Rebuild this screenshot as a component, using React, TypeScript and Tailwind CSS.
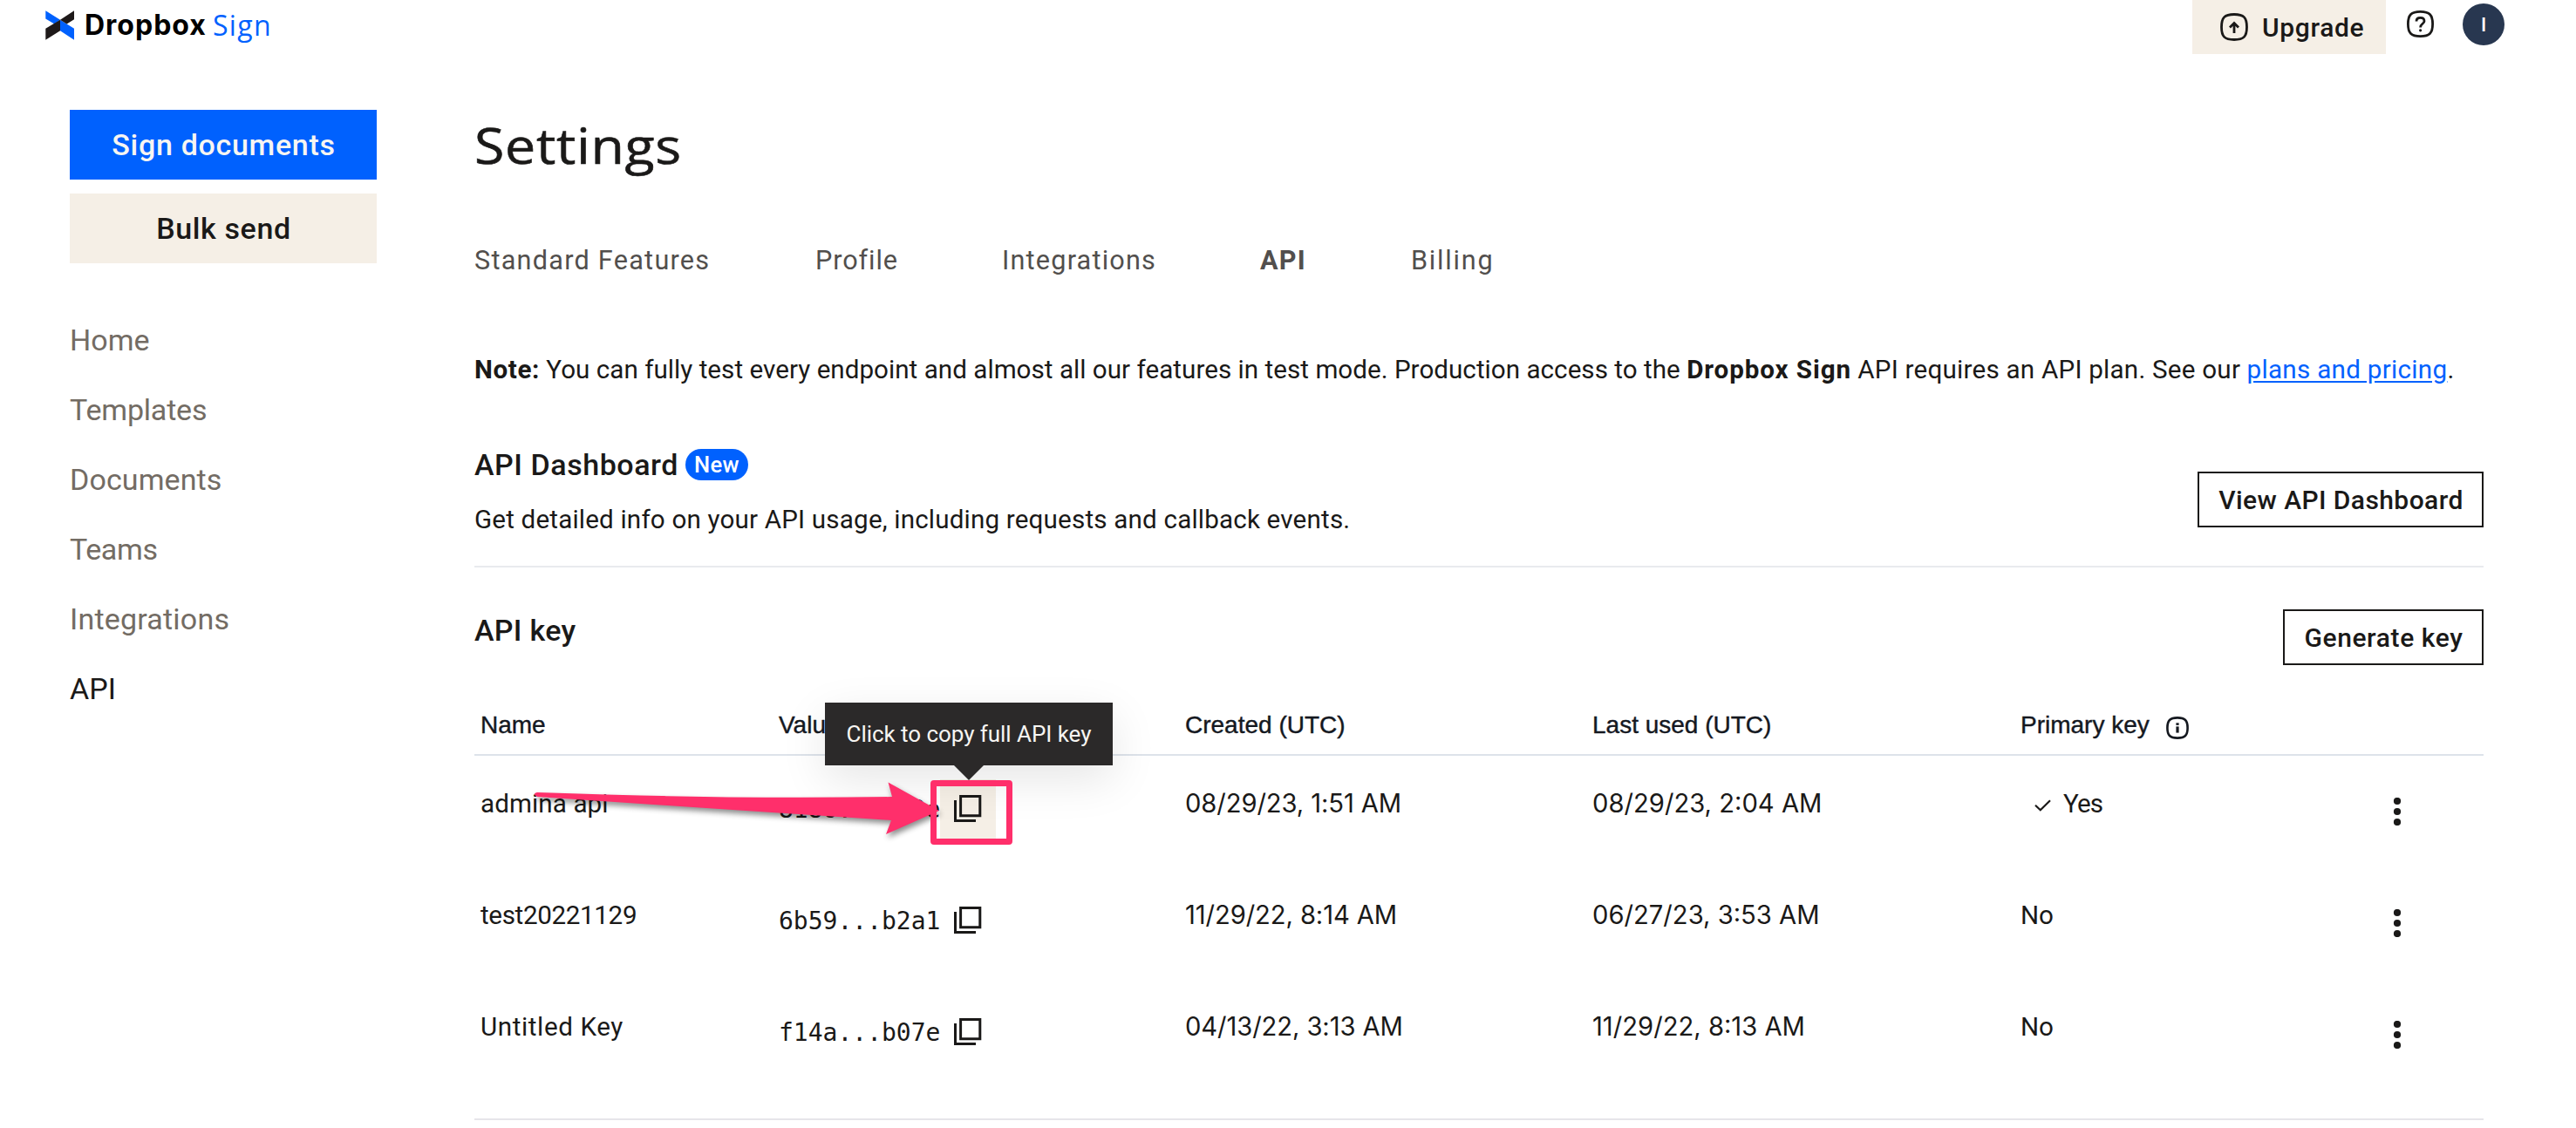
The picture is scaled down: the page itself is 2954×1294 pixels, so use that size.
import { clsx } from "clsx";

const navItems = [
  { label: "Home", className: "text-[#736c64]" },
  { label: "Templates", className: "tracking-[-0.2px] text-[#736c64]" },
  { label: "Documents", className: "tracking-[0.1px] text-[#736c64]" },
  { label: "Teams", className: "tracking-[-0.4px] text-[#736c64]" },
  { label: "Integrations", className: "tracking-[0.2px] text-[#736c64]" },
  { label: "API", className: "text-[#1a1918]" },
];

const tabs = [
  { label: "Standard Features", className: "w-[391px] tracking-[1.26px]" },
  { label: "Profile", className: "w-[214px] tracking-[0.9px]" },
  { label: "Integrations", className: "w-[296px] tracking-[1.2px]" },
  { label: "API", className: "w-[173px] font-bold tracking-[1.3px]" },
  { label: "Billing", className: "tracking-[1.8px]" },
];

const apiKeys = [
  {
    name: "admina api",
    nameClass: "tracking-[0.1px]",
    value: "8186...b09e",
    created: "08/29/23, 1:51 AM",
    lastUsed: "08/29/23, 2:04 AM",
    primary: true,
  },
  {
    name: "test20221129",
    nameClass: "tracking-[-0.35px]",
    value: "6b59...b2a1",
    created: "11/29/22, 8:14 AM",
    lastUsed: "06/27/23, 3:53 AM",
    primary: false,
  },
  {
    name: "Untitled Key",
    nameClass: "tracking-[0.6px]",
    value: "f14a...b07e",
    created: "04/13/22, 3:13 AM",
    lastUsed: "11/29/22, 8:13 AM",
    primary: false,
  },
];

const columns = "grid grid-cols-[342px_467px_467px_491px_339px_1fr]";

function LogoMark() {
  return (
    <svg className="h-[34px] w-[34px]" viewBox="0 0 34 34">
      <path d="M0.3 0.3 L17 10.7 L10.4 15.6 L0.3 9.6 Z M17 10.7 L33 20.8 V33.7 L17 23.3 Z" fill="#0061fe" />
      <path d="M33 0.3 L17 10.7 L24.6 15.6 L33 10.2 Z M17 10.7 L0.3 20.8 V33.7 L17 23.3 Z" fill="#1e1919" />
    </svg>
  );
}

function UpgradeIcon() {
  return (
    <svg className="h-8 w-8" viewBox="0 0 32 32" fill="none" stroke="#1a1918" strokeWidth="2.8">
      <path d="M16 1.5 C27 1.5 30.5 5 30.5 16 C30.5 27 27 30.5 16 30.5 C5 30.5 1.5 27 1.5 16 C1.5 5 5 1.5 16 1.5 Z" />
      <path d="M16 23 V12 M11 16.6 L16 11.6 L21 16.6" />
    </svg>
  );
}

function HelpIcon() {
  return (
    <svg className="h-[31px] w-[31px]" viewBox="0 0 31 31" fill="none" stroke="#1a1918" strokeWidth="2.8">
      <path d="M15.5 1.4 C26 1.4 29.6 5 29.6 15.5 C29.6 26 26 29.6 15.5 29.6 C5 29.6 1.4 26 1.4 15.5 C1.4 5 5 1.4 15.5 1.4 Z" />
      <path d="M11 12.4 C11 9.8 12.8 8.4 15.5 8.4 C18.2 8.4 20 9.9 20 12.2 C20 15.3 15.6 15.4 15.6 19.4" />
      <circle cx="15.6" cy="22.8" r="1.6" fill="#1a1918" stroke="none" />
    </svg>
  );
}

function InfoIcon() {
  return (
    <svg className="h-[26px] w-[26px]" viewBox="0 0 26 26" fill="none" stroke="#14181f" strokeWidth="2.6">
      <path d="M13 1.4 C21.6 1.4 24.6 4.4 24.6 13 C24.6 21.6 21.6 24.6 13 24.6 C4.4 24.6 1.4 21.6 1.4 13 C1.4 4.4 4.4 1.4 13 1.4 Z" />
      <path d="M13 11.4 V18.6" strokeWidth="3.2" />
      <path d="M11.4 8.6 H14.6" strokeWidth="2.6" />
    </svg>
  );
}

function CopyIcon() {
  return (
    <svg className="h-8 w-8" viewBox="0 0 32 32" fill="none" stroke="#1a1918" strokeWidth="3">
      <path d="M7.6 1.5 H29.8 V23.7 H7.6 Z" />
      <path d="M1.5 6 V29.5 H25" />
    </svg>
  );
}

function CheckIcon() {
  return (
    <svg className="mt-[3px] mr-[14px] h-[14px] w-[19px]" viewBox="0 0 19 14" fill="none" stroke="#1a1918" strokeWidth="2.2">
      <path d="M1 6.8 L6.8 12.2 L18 1.2" />
    </svg>
  );
}

function KebabIcon() {
  return (
    <svg className="h-8 w-8" viewBox="0 0 32 32" fill="#1a1918">
      <circle cx="16" cy="4" r="4.1" />
      <circle cx="16" cy="16" r="4.1" />
      <circle cx="16" cy="28" r="4.1" />
    </svg>
  );
}

function Tooltip() {
  return (
    <div className="absolute top-[-61px] left-[60px] z-10 flex h-[72px] w-[330px] items-center justify-center bg-[#2b2929] text-[26px] tracking-[-0.05px] text-[#f7f5f2] shadow-[0_16px_52px_rgba(0,0,0,0.1)]">
      Click to copy full API key
      <svg className="absolute top-full left-[148px] h-[17px] w-[34px]" viewBox="0 0 34 17">
        <path d="M0 0 H34 L17 17 Z" fill="#2b2929" />
      </svg>
    </div>
  );
}

// Pink arrow and frame that call out the copy button
function Pointer() {
  return (
    <>
      <svg
        className="absolute top-[20px] left-[-280px] z-20 h-[90px] w-[490px] drop-shadow-[2px_4px_3px_rgba(0,0,0,0.45)]"
        viewBox="0 0 490 90"
        fill="#ff2f6b"
      >
        <path d="M10 22 Q230 30 417 27 L412.5 10.5 L471 43 L410 70 L416 54 Q230 42 10 27 Q6 25 7 23.5 Q8 22 10 22 Z" />
      </svg>
      <div className="absolute top-[28px] left-[181px] z-20 h-[74px] w-[94px] rounded-[4px] border-[7px] border-[#ff2f6b]" />
    </>
  );
}

function Header() {
  return (
    <header className="flex h-[62px] items-start justify-between">
      <div className="flex h-[57px] items-center pl-[52px]">
        <LogoMark />
        <span className="ml-[11px] font-[Inter,sans-serif] text-[32px] font-bold tracking-[1px] text-black">Dropbox</span>
        <span className="ml-[7px] font-['Open_Sans',sans-serif] text-[32px] tracking-[1.4px] text-[#0061fe]">Sign</span>
      </div>
      <div className="flex items-start pr-[82px]">
        <button className="flex h-[62px] w-[222px] items-center bg-[#f5efe6] pl-8 text-[30px] font-medium tracking-[0.65px]">
          <UpgradeIcon />
          <span className="ml-4">Upgrade</span>
        </button>
        <span className="mt-3 ml-6">
          <HelpIcon />
        </span>
        <span className="mt-1 ml-[33px] flex size-12 items-center justify-center rounded-full bg-[#283750] text-[22px] font-medium text-white">
          I
        </span>
      </div>
    </header>
  );
}

function Sidebar() {
  return (
    <aside className="w-[352px] pt-16">
      <button className="flex h-20 w-full items-center justify-center bg-[#0061fe] pl-px text-[34px] font-medium tracking-[0.7px] text-[#f7f5f2]">
        Sign documents
      </button>
      <button className="mt-4 flex h-20 w-full items-center justify-center bg-[#f5efe6] pl-px text-[34px] font-medium tracking-[0.6px]">
        Bulk send
      </button>
      <nav className="mt-12">
        {navItems.map((item) => (
          <a key={item.label} className={clsx("flex h-20 items-center text-[34px]", item.className)}>
            {item.label}
          </a>
        ))}
      </nav>
    </aside>
  );
}

function KeyTable() {
  return (
    <div className="mt-[34px] border-b-2 border-[#e6e5ea] pb-8 text-[29.6px]">
      <div
        className={clsx(
          columns,
          "h-[70px] items-center border-b-2 border-[#dde3ea] pt-[2px] font-['Liberation_Sans',sans-serif] text-[28px] text-[#14181f] [-webkit-text-stroke:0.4px_#14181f]"
        )}
      >
        <div className="pl-[7px]">Name</div>
        <div className="pl-[7px]">Value</div>
        <div className="pl-[6px]">Created (UTC)</div>
        <div className="pl-[6px]">Last used (UTC)</div>
        <div className="flex items-center pl-[6px]">
          <span>Primary key</span>
          <span className="mt-[6px] ml-[19px]">
            <InfoIcon />
          </span>
        </div>
      </div>
      {apiKeys.map((key, i) => (
        <div key={key.name} className={clsx(columns, "h-32 leading-10")}>
          <div className={clsx("pt-[35px] pl-[7px]", key.nameClass)}>{key.name}</div>
          <div className="relative pl-[6px]">
            <div className="mt-[27px] flex h-[68px] items-center">
              <span className="w-[186px] pt-[2px] pl-px font-['DejaVu_Sans_Mono',monospace] text-[28px]">{key.value}</span>
              <button className={clsx("flex h-full w-16 items-center justify-center", i === 0 && "bg-[#f5efe6]")}>
                <CopyIcon />
              </button>
            </div>
            {i === 0 && <Tooltip />}
            {i === 0 && <Pointer />}
          </div>
          <div className="pt-[35px] pl-[6px] font-[Inter,sans-serif] text-[29.2px] tracking-[-0.1px]">{key.created}</div>
          <div className="pt-[35px] pl-[6px] font-[Inter,sans-serif] text-[29.2px]">{key.lastUsed}</div>
          <div className="pt-[35px] pl-[6px]">
            {key.primary ? (
              <div className="flex items-center pl-4">
                <CheckIcon />
                <span className="tracking-[-0.9px]">Yes</span>
              </div>
            ) : (
              "No"
            )}
          </div>
          <div className="flex items-center justify-center">
            <KebabIcon />
          </div>
        </div>
      ))}
    </div>
  );
}

export default function App() {
  return (
    <div className="h-[1294px] w-[2954px] overflow-hidden bg-white font-[Roboto,sans-serif] text-[#1a1918]">
      <Header />

      <div className="flex pl-20">
        <Sidebar />
        <main className="ml-[112px] w-[2304px] pt-16">
          <h1 className="flex h-20 items-center pt-[2px] font-['Open_Sans',sans-serif] text-[57px] tracking-[0.6px] [-webkit-text-stroke:0.6px_#1a1918]">
            <span className="origin-left scale-x-[1.1]">Settings</span>
          </h1>

          <div className="mt-[73px] flex h-10 items-center text-[30.6px] text-[#524f4d]">
            {tabs.map((tab) => (
              <a key={tab.label} className={tab.className}>
                {tab.label}
              </a>
            ))}
          </div>

          <p className="mt-[81px] h-12 text-[29.6px] leading-[48px] whitespace-nowrap">
            <b className="tracking-[0.6px]">Note:</b>{" "}
            <span className="tracking-[0.03px]">
              You can fully test every endpoint and almost all our features in test mode. Production access to the
            </span>{" "}
            <b className="tracking-[0.9px]">Dropbox Sign</b>{" "}
            <span className="tracking-[0.23px]">API requires an API plan. See our</span>{" "}
            <a className="tracking-[0.3px] text-[#0061fe] underline underline-offset-[3px]">plans and pricing</a>.
          </p>

          <section className="mt-[67px] flex items-start justify-between border-b-2 border-[#e9eaee] pb-[35px]">
            <div>
              <div className="flex h-9 items-center">
                <h2 className="text-[34px] font-medium tracking-[0.55px]">API Dashboard</h2>
                <span className="ml-2 flex h-9 w-[72px] items-center justify-center rounded-[18px] bg-[#0061fe] text-[25.6px] font-medium tracking-[0.3px] text-white">
                  New
                </span>
              </div>
              <p className="mt-[27px] h-9 text-[29.6px] leading-9 tracking-[0.18px]">
                Get detailed info on your API usage, including requests and callback events.
              </p>
            </div>
            <button className="mt-[26px] flex h-16 w-[328px] items-center justify-center border-2 border-[#1a1918] pl-px text-[30px] font-medium tracking-[0.42px]">
              View API Dashboard
            </button>
          </section>

          <section className="mt-12 flex h-16 items-start justify-between">
            <h2 className="text-[34px] leading-[48px] font-medium tracking-[0.3px]">API key</h2>
            <button className="flex h-16 w-[230px] items-center justify-center border-2 border-[#1a1918] pl-px text-[30px] font-medium tracking-[0.6px]">
              Generate key
            </button>
          </section>

          <KeyTable />
        </main>
      </div>
    </div>
  );
}
